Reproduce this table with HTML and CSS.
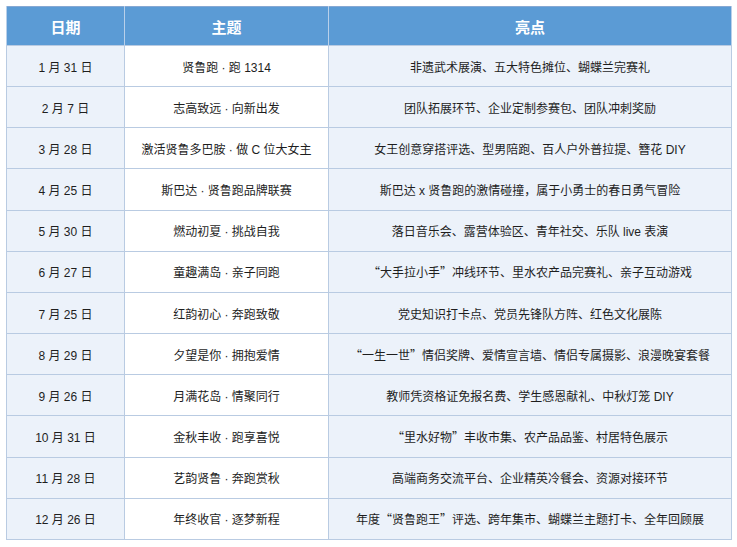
FILE: index.html
```html
<!DOCTYPE html>
<html lang="zh-CN">
<head>
<meta charset="utf-8">
<link rel="stylesheet" href="styles.css">
</head>
<body>
<div class="wrap">
<table class="schedule">
  <colgroup>
    <col class="c-date">
    <col class="c-theme">
    <col class="c-high">
  </colgroup>
  <thead>
    <tr><th>日期</th><th>主题</th><th>亮点</th></tr>
  </thead>
  <tbody>
    <tr><td class="tint">1 月 31 日</td><td>贤鲁跑 · 跑 1314</td><td class="tint">非遗武术展演、五大特色摊位、蝴蝶兰完赛礼</td></tr>
    <tr><td class="tint">2 月 7 日</td><td>志高致远 · 向新出发</td><td class="tint">团队拓展环节、企业定制参赛包、团队冲刺奖励</td></tr>
    <tr><td class="tint">3 月 28 日</td><td>激活贤鲁多巴胺 · 做 C 位大女主</td><td class="tint">女王创意穿搭评选、型男陪跑、百人户外普拉提、簪花 DIY</td></tr>
    <tr><td class="tint">4 月 25 日</td><td>斯巴达 · 贤鲁跑品牌联赛</td><td class="tint">斯巴达 x 贤鲁跑的激情碰撞，属于小勇士的春日勇气冒险</td></tr>
    <tr><td class="tint">5 月 30 日</td><td>燃动初夏 · 挑战自我</td><td class="tint">落日音乐会、露营体验区、青年社交、乐队 live 表演</td></tr>
    <tr><td class="tint">6 月 27 日</td><td>童趣满岛 · 亲子同跑</td><td class="tint"><span class="q">“</span>大手拉小手<span class="q">”</span>冲线环节、里水农产品完赛礼、亲子互动游戏</td></tr>
    <tr><td class="tint">7 月 25 日</td><td>红韵初心 · 奔跑致敬</td><td class="tint">党史知识打卡点、党员先锋队方阵、红色文化展陈</td></tr>
    <tr><td class="tint">8 月 29 日</td><td>夕望是你 · 拥抱爱情</td><td class="tint"><span class="q">“</span>一生一世<span class="q">”</span>情侣奖牌、爱情宣言墙、情侣专属摄影、浪漫晚宴套餐</td></tr>
    <tr><td class="tint">9 月 26 日</td><td>月满花岛 · 情聚同行</td><td class="tint">教师凭资格证免报名费、学生感恩献礼、中秋灯笼 DIY</td></tr>
    <tr><td class="tint">10 月 31 日</td><td>金秋丰收 · 跑享喜悦</td><td class="tint"><span class="q">“</span>里水好物<span class="q">”</span>丰收市集、农产品品鉴、村居特色展示</td></tr>
    <tr><td class="tint">11 月 28 日</td><td>艺韵贤鲁 · 奔跑赏秋</td><td class="tint">高端商务交流平台、企业精英冷餐会、资源对接环节</td></tr>
    <tr><td class="tint">12 月 26 日</td><td>年终收官 · 逐梦新程</td><td class="tint">年度<span class="q">“</span>贤鲁跑王<span class="q">”</span>评选、跨年集市、蝴蝶兰主题打卡、全年回顾展</td></tr>
  </tbody>
</table>
</div>
</body>
</html>
```

FILE: styles.css
```css
html, body {
  margin: 0;
  padding: 0;
  background: #ffffff;
}

.wrap {
  padding: 6px 0 0 6px;
}

.schedule {
  width: 725px;
  table-layout: fixed;
  border-collapse: collapse;
  border: 1px solid #86a8d3;
  font-family: "Liberation Sans", "Noto Sans CJK SC", sans-serif;
  font-size: 12px;
  color: #1e1e1e;
}

.c-date { width: 118px; }
.c-theme { width: 204px; }
.c-high { width: 403px; }

.schedule th {
  height: 38px;
  padding: 0;
  background: #5b9bd5;
  color: #ffffff;
  font-size: 15px;
  font-weight: bold;
  text-align: center;
  border-left: 1px solid #b9d0ea;
  border-right: 1px solid #b9d0ea;
  border-bottom: 1px solid #b9cbe2;
}

.schedule td {
  height: 40.17px;
  padding: 0;
  text-align: center;
  white-space: nowrap;
  background: #ffffff;
  border: 1px solid #b9cbe2;
}

.schedule td.tint {
  background: #ecf2fa;
}

.q {
  font-family: "Noto Sans CJK SC", sans-serif;
}
```
